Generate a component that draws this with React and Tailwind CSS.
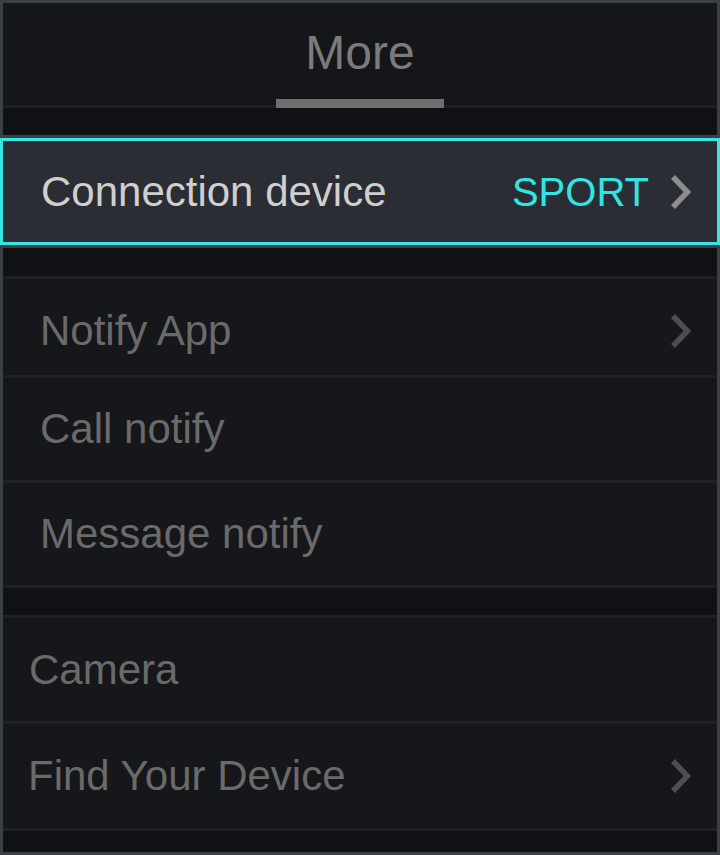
import React from "react";

function Chevron({ color }) {
  return (
    <svg width="22" height="36" viewBox="0 0 22 36" className="shrink-0">
      <path d="M4 3 L18.5 18 L4 33" fill="none" stroke={color} strokeWidth="5.5" strokeLinejoin="miter" />
    </svg>
  );
}

function Row({ label, chevron, h, pl, extra }) {
  return (
    <div className={`box-content flex items-center justify-between bg-[#16171a] pr-[26px] border-b-[3px] border-[#1e2023] ${h} ${pl} ${extra || ""}`}>
      <span className="text-[42px] leading-none text-[#6a6a6a]">{label}</span>
      {chevron && <Chevron color="#4e4e4e" />}
    </div>
  );
}

export default function App() {
  return (
    <div
      className="w-[720px] h-[855px] border-[3px] border-[#3a3f48] bg-[#101114] flex flex-col"
      style={{ fontFamily: '"Liberation Sans", Arial, sans-serif' }}
    >
      {/* Header */}
      <div className="bg-[#151619] border-b-[3px] border-[#1e2023] flex flex-col items-center pt-[26px] shrink-0">
        <div className="text-[48px] leading-[48px] text-[#7b7b7b]">More</div>
        <div className="mt-[22px] w-[168px] h-[9px] -mb-[3px] bg-[#6f6f6f] relative z-10" />
      </div>

      <div className="h-[27px] shrink-0" />

      {/* Selected row */}
      <div className="border-y-[3px] border-[#3a3f48] -mx-[3px] shrink-0 relative z-10">
        <div className="h-[107px] border-[3px] border-[#35e6e6] bg-[#2a2d33] flex items-center justify-between pl-[38px] pr-[26px]">
          <span className="text-[42px] leading-none text-[#cfcfcf]">Connection device</span>
          <div className="flex items-center gap-[20px]">
            <span className="text-[40px] leading-none text-[#31e5e5]">SPORT</span>
            <Chevron color="#8d8d8d" />
          </div>
        </div>
      </div>

      <div className="h-[28px] shrink-0" />

      {/* Group 1 */}
      <div className="flex flex-col border-t-[3px] border-[#1e2023] shrink-0">
        <Row label="Notify App" chevron h="h-[89px]" pl="pl-[37px]" extra="pt-[7px]" />
        <Row label="Call notify" h="h-[102px]" pl="pl-[37px]" />
        <Row label="Message notify" h="h-[102px]" pl="pl-[37px]" />
      </div>

      <div className="h-[27px] shrink-0" />

      {/* Group 2 */}
      <div className="flex flex-col border-t-[3px] border-[#1e2023] shrink-0">
        <Row label="Camera" h="h-[103px]" pl="pl-[26px]" />
        <Row label="Find Your Device" chevron h="h-[104px]" pl="pl-[25px]" />
      </div>

      <div className="flex-1" />
    </div>
  );
}
